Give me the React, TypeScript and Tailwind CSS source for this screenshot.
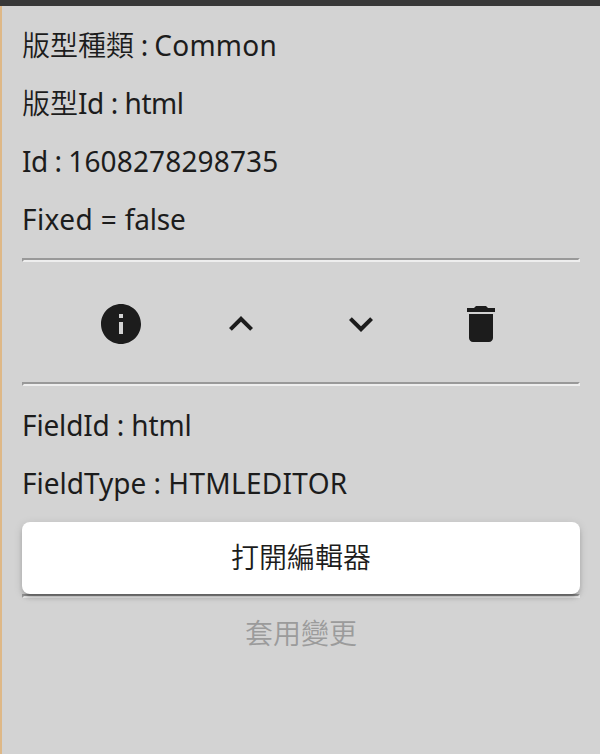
import type { ReactNode } from "react";

const ICONS = {
  info: "M12 2C6.48 2 2 6.48 2 12s4.48 10 10 10 10-4.48 10-10S17.52 2 12 2zm1 15h-2v-6h2v6zm0-8h-2V7h2v2z",
  up: "M12 8l-6 6 1.41 1.41L12 10.83l4.59 4.58L18 14z",
  down: "M16.59 8.59L12 13.17 7.41 8.59 6 10l6 6 6-6z",
  trash: "M6 19c0 1.1.9 2 2 2h8c1.1 0 2-.9 2-2V7H6v12zM19 4h-3.5l-1-1h-5l-1 1H5v2h14V4z",
};

function Icon({ d }: { d: string }) {
  return (
    <button className="flex h-[120px] w-[120px] items-center justify-center pt-1">
      <svg viewBox="0 0 24 24" className="size-12 fill-[#1c1c1c]">
        <path d={d} />
      </svg>
    </button>
  );
}

function Rule() {
  return <hr className="h-1 border-2 border-t-[#999999] border-r-[#eeeeee] border-b-[#eeeeee] border-l-[#999999]" />;
}

function Row({ children }: { children: ReactNode }) {
  return <div className="flex h-[58px] whitespace-pre text-[28px] leading-[58px]">{children}</div>;
}

function Cjk({ children }: { children: string }) {
  return <span className="-mt-0.5 h-[58px] font-['Noto_Sans_CJK_TC',sans-serif] font-[350]">{children}</span>;
}

function Latin({ children, className = "" }: { children: string; className?: string }) {
  return (
    <span className={`-mt-px inline-block origin-[0_39px] scale-y-[1.07] font-['Noto_Sans',sans-serif] ${className}`}>
      {children}
    </span>
  );
}

export default function App() {
  return (
    <main className="h-[754px] w-[600px] overflow-hidden border-t-[6px] border-[#383838] bg-[#d3d3d3] text-[#1c1c1c]">
      <div className="flex h-full flex-col border-l-2 border-[#deb887] pt-[11px] pr-5 pl-5">
        <Row>
          <Cjk>版型種類</Cjk>
          <Latin className="tracking-[-0.6px]">{" : "}</Latin>
          <Latin className="tracking-[0.25px]">Common</Latin>
        </Row>
        <Row>
          <Cjk>版型</Cjk>
          <Latin className="tracking-[-0.45px]">Id : html</Latin>
        </Row>
        <Row>
          <Latin className="tracking-[-0.5px]">{"Id : "}</Latin>
          <Latin className="tracking-[0.15px]">1608278298735</Latin>
        </Row>
        <Row>
          <Latin className="tracking-[0.4px]">{"Fixed = "}</Latin>
          <Latin className="tracking-[-0.2px]">false</Latin>
        </Row>
        <div className="mt-[9px]"><Rule /></div>
        <div className="flex h-[120px] justify-center">
          <Icon d={ICONS.info} />
          <Icon d={ICONS.up} />
          <Icon d={ICONS.down} />
          <Icon d={ICONS.trash} />
        </div>
        <Rule />
        <div className="mt-[11px]">
          <Row><Latin className="tracking-[-0.15px]">FieldId : html</Latin></Row>
          <Row>
            <Latin>{"FieldType : "}</Latin>
            <Latin className="tracking-[0.3px]">HTMLEDITOR</Latin>
          </Row>
        </div>
        <button className="relative mt-[9px] h-[72px] shrink-0 rounded-lg bg-white pb-1 font-['Noto_Sans_CJK_TC',sans-serif] text-[28px] leading-[68px] font-[350] shadow-[0_6px_2px_-4px_rgba(0,0,0,0.2),0_4px_4px_0_rgba(0,0,0,0.14),0_2px_10px_0_rgba(0,0,0,0.12)]">
          打開編輯器
        </button>
        <Rule />
        <button className="h-[72px] shrink-0 pb-1 font-['Noto_Sans_CJK_TC',sans-serif] text-[28px] leading-[68px] font-[350] text-[#9b9b9b]">
          套用變更
        </button>
      </div>
    </main>
  );
}
